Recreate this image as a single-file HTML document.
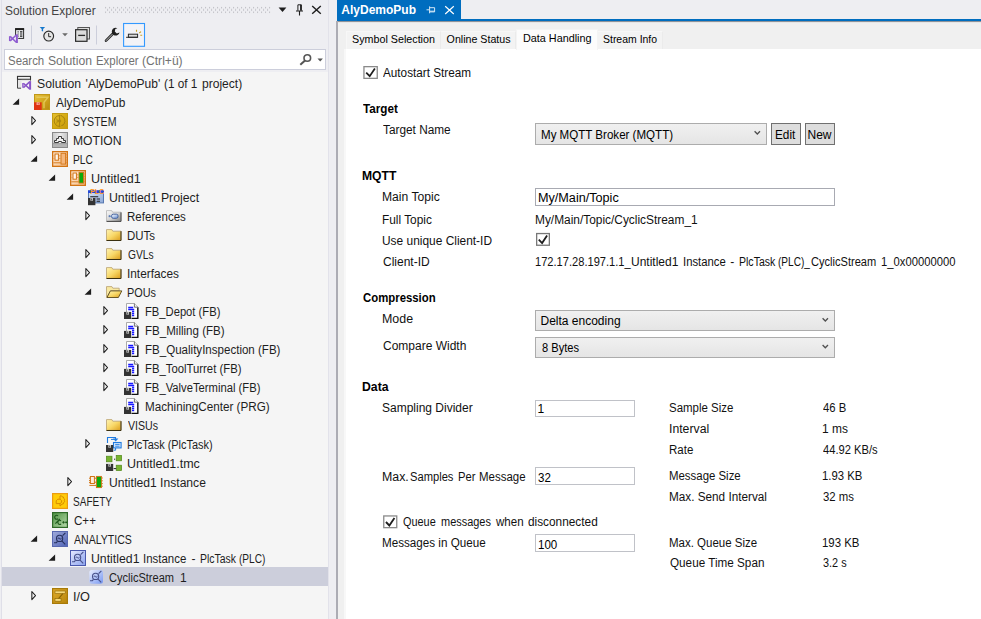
<!DOCTYPE html>
<html><head><meta charset="utf-8"><title>AlyDemoPub</title>
<style>
html,body{margin:0;padding:0}
body{width:981px;height:619px;overflow:hidden;position:relative;background:#fff;font-family:"Liberation Sans", Arial, sans-serif}
.t{position:absolute;white-space:pre;transform-origin:0 0}
svg{overflow:visible}
</style></head><body>
<div style="position:absolute;left:0px;top:0px;width:329px;height:619px;background:#f5f5f5"></div>
<div style="position:absolute;left:0px;top:0px;width:329px;height:72px;background:#eeeef2"></div>
<div style="position:absolute;left:0px;top:0px;width:1.3px;height:619px;background:#eeeef2"></div>
<div style="position:absolute;left:1.3px;top:0px;width:0.8px;height:619px;background:#dfdfe8"></div>
<div style="position:absolute;left:328.3px;top:0px;width:1.2px;height:619px;background:#e2e2ea"></div>
<div style="position:absolute;left:329px;top:0px;width:8px;height:619px;background:#eeeef2"></div>
<div style="position:absolute;left:337px;top:0px;width:644px;height:19px;background:#eeeef2"></div>
<div style="position:absolute;left:337px;top:19px;width:644px;height:2px;background:#006dbf"></div>
<div style="position:absolute;left:337px;top:0px;width:124px;height:21px;background:#006dbf"></div>
<div style="position:absolute;left:337px;top:21px;width:644px;height:598px;background:#f0f0f0"></div>
<div style="position:absolute;left:336px;top:21px;width:2px;height:598px;background:#acacb4"></div>
<div style="position:absolute;left:338px;top:21px;width:643px;height:1px;background:#8f9399"></div>
<div style="position:absolute;left:338px;top:22px;width:643px;height:1px;background:#e6e6e6"></div>
<div style="position:absolute;left:344px;top:49px;width:3px;height:570px;background:#fafafa"></div>
<div style="position:absolute;left:344px;top:49px;width:637px;height:570px;background:#fff"></div>
<div style="position:absolute;left:344px;top:49px;width:2px;height:570px;background:#f8f8f8"></div>
<svg style="position:absolute;left:105px;top:6px" width="167" height="8"><g transform="translate(0,0.7)"><defs><pattern id="gp" width="4" height="4.9" patternUnits="userSpaceOnUse"><rect x="0" y="0" width="1.1" height="1.5" fill="#bcbcc2"/><rect x="2" y="2.45" width="1.1" height="1.5" fill="#bcbcc2"/></pattern></defs><rect width="166" height="6.5" fill="url(#gp)"/></g></svg>
<svg style="position:absolute;left:276px;top:2px" width="50" height="18" viewBox="0 0 50 18"><path d="M2.6 5.6h7.8l-3.9 4.3z" fill="#1e1e1e"/><path d="M21.9 8.7V2.8h3.5v5.9M24.6 2.8v5.9" stroke="#1e1e1e" stroke-width="1" fill="none"/><path d="M20 9h7M23.5 9v4.4" stroke="#1e1e1e" stroke-width="1.1" fill="none"/><path d="M36.2 4l8.6 7.8M44.8 4l-8.6 7.8" stroke="#1e1e1e" stroke-width="1.4" fill="none"/></svg>
<svg style="position:absolute;left:0;top:22px" width="160" height="26" viewBox="0 22 160 26"><rect x="15.6" y="29" width="8" height="9.4" fill="#eeeef2" stroke="#2b2b2b" stroke-width="1"/><rect x="15.1" y="28.1" width="9" height="2" fill="#1e1e1e"/><path d="M17.6 31.9h1M20 31.9h2.4M17.6 34h1M20 34h2.4M17.6 36.1h1M20 36.1h2.4" stroke="#1e1e1e" stroke-width="1.1"/><path d="M8.4 35.4h9.8v8.2h-9.8z" fill="#eeeef2"/><path d="M16.2 35L10.2 40.9M16.2 42.3L10.2 36.4" stroke="#8e5bd0" stroke-width="1.5" fill="none"/><path d="M9.7 36.2v4.9" stroke="#8e5bd0" stroke-width="1.5"/><path d="M16.9 34.3v8.7" stroke="#8e5bd0" stroke-width="2"/><path d="M31.5 25.5v19M96.5 25.5v19" stroke="#cccedb" stroke-width="1"/><path d="M39.7 26.9h5.4l-2 2.2v2.5l-1.4-.6v-1.9z" fill="#1477cc"/><circle cx="48.7" cy="36.1" r="4.9" fill="#e6e6e6" stroke="#2b2b2b" stroke-width="1.15"/><path d="M48.7 33v3.7h2.4" stroke="#2b2b2b" stroke-width="1" fill="none"/><path d="M62.2 33.2h5.6l-2.8 3z" fill="#6a6a6a"/><rect x="77.8" y="27.5" width="11.7" height="11.5" fill="#dcdcdc" stroke="#555" stroke-width="1"/><rect x="75.6" y="29.7" width="11.4" height="11.6" fill="#dcdcdc" stroke="#2b2b2b" stroke-width="1.2"/><path d="M78.2 35.4h6.9" stroke="#2b2b2b" stroke-width="1.3"/><path d="M106 40.7l6.6-6.7" stroke="#2b2b2b" stroke-width="2.6" stroke-linecap="round"/><path d="M106.2 40.5l6-6.1" stroke="#dcdcdc" stroke-width="0.8" stroke-linecap="round"/><path d="M117.4 28.2a3.9 3.9 0 1 0 2.1 4.3l-2.7 .9-2-1.8.5-2.6z" fill="#1e1e1e"/><rect x="123.6" y="23.5" width="20.9" height="22.8" fill="#f3f3f7" stroke="#3399ff" stroke-width="1.1"/><rect x="128.4" y="34.2" width="9.2" height="3.1" fill="#dcdcdc" stroke="#2b2b2b" stroke-width="1"/><path d="M126.1 37.3h11.5" stroke="#2b2b2b" stroke-width="1"/><path d="M136.5 29.7v2.1M139.3 33l1.7-1.4M140.3 35.3h1.9" stroke="#c8a020" stroke-width="1.1"/></svg>
<div style="position:absolute;left:4px;top:49px;width:322px;height:21px;background:#fff;border:1px solid #cccedb;box-sizing:border-box"></div>
<svg style="position:absolute;left:296px;top:51px" width="30" height="18" viewBox="0 0 30 18"><circle cx="11.3" cy="7" r="3.3" stroke="#555" stroke-width="1.6" fill="none"/><path d="M9 9.4L4.3 13.8" stroke="#555" stroke-width="2"/><path d="M21.5 7.4h5.4l-2.7 3z" fill="#555"/></svg>
<svg style="position:absolute;left:16px;top:75px" width="16" height="16" viewBox="0 0 16 16"><rect x="1.5" y="1.5" width="13" height="11.8" fill="#e6e6e6" stroke="none"/><path d="M1.5 1.5v11.7h3.7M14.5 1.5v4.5" fill="none" stroke="#444" stroke-width="1"/><rect x="1.5" y="1.4" width="13" height="2.9" fill="#f2f2f2" stroke="#333" stroke-width="1.1"/><rect x="5.4" y="5.6" width="10.4" height="9.6" fill="#f5f5f5"/><rect x="5.4" y="4.9" width="8.6" height="1.2" fill="#e6e6e6"/><path d="M13.6 6.9L7.4 12.6M13.6 13.9L7.4 8.2" stroke="#8a55c8" stroke-width="1.5" fill="none"/><path d="M6.9 8v4.8" stroke="#8a55c8" stroke-width="1.4"/><path d="M14.1 6.1v8.6" stroke="#8a55c8" stroke-width="2"/></svg>
<svg style="position:absolute;left:12px;top:98px" width="9" height="9"><path d="M7.1 0.4V6.8H0.6z" fill="#1e1e1e"/></svg>
<svg style="position:absolute;left:34px;top:94px" width="16" height="16" viewBox="0 0 16 16"><defs><linearGradient id="gp1" x1="0" y1="0" x2="1" y2="1"><stop offset="0" stop-color="#e8c444"/><stop offset="0.5" stop-color="#d4a81e"/><stop offset="1" stop-color="#b48810"/></linearGradient></defs><rect x="0" y="0" width="16" height="16" fill="url(#gp1)"/><rect x="0.5" y="0.5" width="15" height="15" fill="none" stroke="#c09818" stroke-width="1"/><path d="M2.4 3.2h11.6l-4 5v6" stroke="#e6cc60" stroke-width="1.4" fill="none" opacity="0.85"/><rect x="0" y="8.3" width="7.7" height="7.7" fill="#e03412"/><rect x="2.6" y="8.3" width="3" height="2.7" fill="#f6c0b4"/><rect x="3.7" y="8.8" width="0.9" height="1.8" fill="#e03412"/></svg>
<svg style="position:absolute;left:31px;top:115px" width="8" height="12"><path d="M0.85 1.5L4.5 5.55L0.85 9.6z" fill="none" stroke="#1e1e1e" stroke-width="1.05" stroke-linejoin="round"/></svg>
<svg style="position:absolute;left:52px;top:113px" width="16" height="16" viewBox="0 0 16 16"><defs><linearGradient id="gs1" x1="0" y1="0" x2="1" y2="1"><stop offset="0" stop-color="#e6c030"/><stop offset="0.5" stop-color="#d6ac14"/><stop offset="1" stop-color="#c89c0c"/></linearGradient></defs><rect x="0.5" y="0.5" width="15" height="15" fill="url(#gs1)" stroke="#c39c14"/><path d="M7.6 2.6A5.4 5.4 0 0 0 7.6 13.4" fill="none" stroke="#a88410" stroke-width="1"/><path d="M7.6 1.8v12.4M8.4 2.6l1.6.2.4 1 1.3.3.2 1.2 1 .6-.3 1.3.5 1-.6 1 .1 1.2-1.1.6-.4 1.2-1.3.2-.8 .9" fill="none" stroke="#a88410" stroke-width="1"/><circle cx="7.6" cy="8" r="1.2" fill="none" stroke="#a88410" stroke-width="0.9"/><path d="M4.2 5.5c1.6 1.5 1.6 3.5 0 5" fill="none" stroke="#a88410" stroke-width="0.9"/></svg>
<svg style="position:absolute;left:31px;top:134px" width="8" height="12"><path d="M0.85 1.5L4.5 5.55L0.85 9.6z" fill="none" stroke="#1e1e1e" stroke-width="1.05" stroke-linejoin="round"/></svg>
<svg style="position:absolute;left:52px;top:132px" width="16" height="16" viewBox="0 0 16 16"><defs><linearGradient id="gm1" x1="0" y1="0" x2="1" y2="0"><stop offset="0" stop-color="#c8c8c8"/><stop offset="0.5" stop-color="#ececec"/><stop offset="1" stop-color="#c4c4c4"/></linearGradient></defs><rect x="0.5" y="0.5" width="15" height="15" fill="url(#gm1)" stroke="#8a8a8a"/><rect x="1" y="12" width="14" height="3" fill="#b4b4b4"/><path d="M1 11.6h14" stroke="#8a8a8a" stroke-width="0.8"/><path d="M2.5 10.5V8.5H4.5V6.5H6.5V4.5H9.5V6.5H11.5V8.5H13.5V10.5H9.5V9.5H6.5V10.5Z" fill="#f0f0f0" stroke="#3a3a3a" stroke-width="1" stroke-linejoin="miter"/></svg>
<svg style="position:absolute;left:30px;top:155px" width="9" height="9"><path d="M7.1 0.4V6.8H0.6z" fill="#1e1e1e"/></svg>
<svg style="position:absolute;left:52px;top:151px" width="16" height="16" viewBox="0 0 16 16"><defs><linearGradient id="gch" x1="0" y1="0" x2="1" y2="1"><stop offset="0" stop-color="#feeede"/><stop offset="1" stop-color="#f5ba80"/></linearGradient></defs><rect x="0.65" y="0.65" width="14.7" height="14.7" fill="url(#gch)" stroke="#d27414" stroke-width="1.3"/><rect x="3" y="3" width="3.4" height="6.2" fill="#fff6ec" stroke="#d27414" stroke-width="1"/><path d="M1.5 4.8h1M1.5 7.4h1M6.9 4.8h1.6M6.9 7.4h1.6M14 3.8h.8M14 6.4h.8M14 9h.8M14 11.4h.8" stroke="#e08a38" stroke-width="0.8"/><rect x="9" y="2.3" width="4.6" height="10.8" fill="#f4b67c" stroke="#d27414" stroke-width="0.9"/><path d="M1.4 11.8h7.4" stroke="#d27414" stroke-width="0.9"/></svg>
<svg style="position:absolute;left:48px;top:174px" width="9" height="9"><path d="M7.1 0.4V6.8H0.6z" fill="#1e1e1e"/></svg>
<svg style="position:absolute;left:70px;top:170px" width="16" height="16" viewBox="0 0 16 16"><defs><linearGradient id="gch" x1="0" y1="0" x2="1" y2="1"><stop offset="0" stop-color="#feeede"/><stop offset="1" stop-color="#f5ba80"/></linearGradient></defs><rect x="0.65" y="0.65" width="14.7" height="14.7" fill="url(#gch)" stroke="#d27414" stroke-width="1.3"/><rect x="3" y="3" width="3.4" height="6.2" fill="#fff6ec" stroke="#d27414" stroke-width="1"/><path d="M1.5 4.8h1M1.5 7.4h1M6.9 4.8h1.6M6.9 7.4h1.6M14 3.8h.8M14 6.4h.8M14 9h.8M14 11.4h.8" stroke="#e08a38" stroke-width="0.8"/><rect x="9" y="2.3" width="4.6" height="10.8" fill="#0aaa0a" stroke="#d27414" stroke-width="0.9"/><path d="M1.4 11.8h7.4" stroke="#d27414" stroke-width="0.9"/></svg>
<svg style="position:absolute;left:66px;top:193px" width="9" height="9"><path d="M7.1 0.4V6.8H0.6z" fill="#1e1e1e"/></svg>
<svg style="position:absolute;left:88px;top:189px" width="16" height="16" viewBox="0 0 16 16"><defs><linearGradient id="gpp" x1="0" y1="0" x2="1" y2="1"><stop offset="0" stop-color="#dce6f6"/><stop offset="1" stop-color="#8ca8d8"/></linearGradient></defs><rect x="0.5" y="1.9" width="15" height="12" fill="url(#gpp)" stroke="#5878b0"/><rect x="0" y="1.4" width="16" height="2.6" fill="#2448dc"/><path d="M2.2 7.8h8M8.6 10h3.4M8.6 12.2h3.4" stroke="#1e1e1e" stroke-width="1.1"/><text x="2.3" y="4.5" font-family="Liberation Sans, sans-serif" font-size="7" font-weight="bold" fill="#ff9420" letter-spacing="-0.1">PLC</text><rect x="0" y="9" width="7.4" height="7.2" fill="#333"/><rect x="2.4" y="9" width="2.6" height="2.7" fill="#d8d8d8"/><rect x="3.3" y="9.5" width="0.9" height="1.8" fill="#333"/></svg>
<svg style="position:absolute;left:85px;top:210px" width="8" height="12"><path d="M0.85 1.5L4.5 5.55L0.85 9.6z" fill="none" stroke="#1e1e1e" stroke-width="1.05" stroke-linejoin="round"/></svg>
<svg style="position:absolute;left:106px;top:208px" width="16" height="16" viewBox="0 0 16 16"><defs><linearGradient id="gr1" x1="0" y1="0" x2="1" y2="1"><stop offset="0" stop-color="#fcfcfc"/><stop offset="0.55" stop-color="#d0d0d0"/><stop offset="1" stop-color="#808080"/></linearGradient><linearGradient id="gr2" x1="0" y1="0" x2="1" y2="1"><stop offset="0" stop-color="#fff"/><stop offset="1" stop-color="#6a90d0"/></linearGradient></defs><path d="M0.5 2.6h5.2l1 1.6h8.3v9.1h-14.5z" fill="url(#gr1)" stroke="#b4b4b4" stroke-width="0.8"/><path d="M15 4.4v9H0.6" stroke="#444" stroke-width="1" fill="none"/><rect x="5.6" y="6.2" width="6.4" height="4.1" rx="1.6" fill="url(#gr2)" stroke="#3a5a9a" stroke-width="0.9"/><path d="M2.6 8.2h3M3.4 7.2v2" stroke="#5a7ab4" stroke-width="1"/></svg>
<svg style="position:absolute;left:106px;top:227px" width="16" height="16" viewBox="0 0 16 16"><defs><linearGradient id="gf1" x1="0" y1="0" x2="1" y2="1"><stop offset="0" stop-color="#fff4b4"/><stop offset="0.5" stop-color="#f8d868"/><stop offset="1" stop-color="#dc9c18"/></linearGradient></defs><path d="M0.5 2.6h5.4l.9 1.6h8.2v9.2h-14.5z" fill="url(#gf1)" stroke="#b8a070" stroke-width="0.8"/><path d="M15 4.2v9.3H0.5" stroke="#3a3010" stroke-width="1" fill="none"/></svg>
<svg style="position:absolute;left:85px;top:248px" width="8" height="12"><path d="M0.85 1.5L4.5 5.55L0.85 9.6z" fill="none" stroke="#1e1e1e" stroke-width="1.05" stroke-linejoin="round"/></svg>
<svg style="position:absolute;left:106px;top:246px" width="16" height="16" viewBox="0 0 16 16"><defs><linearGradient id="gf1" x1="0" y1="0" x2="1" y2="1"><stop offset="0" stop-color="#fff4b4"/><stop offset="0.5" stop-color="#f8d868"/><stop offset="1" stop-color="#dc9c18"/></linearGradient></defs><path d="M0.5 2.6h5.4l.9 1.6h8.2v9.2h-14.5z" fill="url(#gf1)" stroke="#b8a070" stroke-width="0.8"/><path d="M15 4.2v9.3H0.5" stroke="#3a3010" stroke-width="1" fill="none"/></svg>
<svg style="position:absolute;left:85px;top:267px" width="8" height="12"><path d="M0.85 1.5L4.5 5.55L0.85 9.6z" fill="none" stroke="#1e1e1e" stroke-width="1.05" stroke-linejoin="round"/></svg>
<svg style="position:absolute;left:106px;top:265px" width="16" height="16" viewBox="0 0 16 16"><defs><linearGradient id="gf1" x1="0" y1="0" x2="1" y2="1"><stop offset="0" stop-color="#fff4b4"/><stop offset="0.5" stop-color="#f8d868"/><stop offset="1" stop-color="#dc9c18"/></linearGradient></defs><path d="M0.5 2.6h5.4l.9 1.6h8.2v9.2h-14.5z" fill="url(#gf1)" stroke="#b8a070" stroke-width="0.8"/><path d="M15 4.2v9.3H0.5" stroke="#3a3010" stroke-width="1" fill="none"/></svg>
<svg style="position:absolute;left:84px;top:288px" width="9" height="9"><path d="M7.1 0.4V6.8H0.6z" fill="#1e1e1e"/></svg>
<svg style="position:absolute;left:106px;top:284px" width="16" height="16" viewBox="0 0 16 16"><defs><linearGradient id="gf1" x1="0" y1="0" x2="1" y2="1"><stop offset="0" stop-color="#fff4b4"/><stop offset="0.5" stop-color="#f8d868"/><stop offset="1" stop-color="#dc9c18"/></linearGradient></defs><path d="M0.5 2.6h5.4l.9 1.6h6.4v2.6h-8.6L0.5 13.4z" fill="#f8e8a0" stroke="#b8a070" stroke-width="0.8"/><path d="M4.4 6.9h11.4l-3.4 6.6H1z" fill="url(#gf1)" stroke="#5a4818" stroke-width="0.9" stroke-linejoin="round"/></svg>
<svg style="position:absolute;left:103px;top:305px" width="8" height="12"><path d="M0.85 1.5L4.5 5.55L0.85 9.6z" fill="none" stroke="#1e1e1e" stroke-width="1.05" stroke-linejoin="round"/></svg>
<svg style="position:absolute;left:124px;top:303px" width="16" height="16" viewBox="0 0 16 16"><path d="M2.5 0.5h8l3.5 3.5v11.5h-11.5z" fill="#fff" stroke="#a0a0a0" stroke-width="0.9"/><path d="M13.8 4.2v11.2h-6" stroke="#111" stroke-width="1.3" fill="none"/><path d="M10.4 0.6v3.6h3.5" fill="#f0f0f0" stroke="#555" stroke-width="0.8"/><path d="M4.2 4.5h5M4.2 6.5h6M8 8.5h2.2M8 10.5h2.2M8 12.5h2.2" stroke="#1818ff" stroke-width="1.3"/><rect x="0" y="8.9" width="7.2" height="7.1" fill="#333"/><rect x="2.4" y="8.9" width="2.6" height="2.7" fill="#d8d8d8"/><rect x="3.3" y="9.4" width="0.9" height="1.8" fill="#333"/></svg>
<svg style="position:absolute;left:103px;top:324px" width="8" height="12"><path d="M0.85 1.5L4.5 5.55L0.85 9.6z" fill="none" stroke="#1e1e1e" stroke-width="1.05" stroke-linejoin="round"/></svg>
<svg style="position:absolute;left:124px;top:322px" width="16" height="16" viewBox="0 0 16 16"><path d="M2.5 0.5h8l3.5 3.5v11.5h-11.5z" fill="#fff" stroke="#a0a0a0" stroke-width="0.9"/><path d="M13.8 4.2v11.2h-6" stroke="#111" stroke-width="1.3" fill="none"/><path d="M10.4 0.6v3.6h3.5" fill="#f0f0f0" stroke="#555" stroke-width="0.8"/><path d="M4.2 4.5h5M4.2 6.5h6M8 8.5h2.2M8 10.5h2.2M8 12.5h2.2" stroke="#1818ff" stroke-width="1.3"/><rect x="0" y="8.9" width="7.2" height="7.1" fill="#333"/><rect x="2.4" y="8.9" width="2.6" height="2.7" fill="#d8d8d8"/><rect x="3.3" y="9.4" width="0.9" height="1.8" fill="#333"/></svg>
<svg style="position:absolute;left:103px;top:343px" width="8" height="12"><path d="M0.85 1.5L4.5 5.55L0.85 9.6z" fill="none" stroke="#1e1e1e" stroke-width="1.05" stroke-linejoin="round"/></svg>
<svg style="position:absolute;left:124px;top:341px" width="16" height="16" viewBox="0 0 16 16"><path d="M2.5 0.5h8l3.5 3.5v11.5h-11.5z" fill="#fff" stroke="#a0a0a0" stroke-width="0.9"/><path d="M13.8 4.2v11.2h-6" stroke="#111" stroke-width="1.3" fill="none"/><path d="M10.4 0.6v3.6h3.5" fill="#f0f0f0" stroke="#555" stroke-width="0.8"/><path d="M4.2 4.5h5M4.2 6.5h6M8 8.5h2.2M8 10.5h2.2M8 12.5h2.2" stroke="#1818ff" stroke-width="1.3"/><rect x="0" y="8.9" width="7.2" height="7.1" fill="#333"/><rect x="2.4" y="8.9" width="2.6" height="2.7" fill="#d8d8d8"/><rect x="3.3" y="9.4" width="0.9" height="1.8" fill="#333"/></svg>
<svg style="position:absolute;left:103px;top:362px" width="8" height="12"><path d="M0.85 1.5L4.5 5.55L0.85 9.6z" fill="none" stroke="#1e1e1e" stroke-width="1.05" stroke-linejoin="round"/></svg>
<svg style="position:absolute;left:124px;top:360px" width="16" height="16" viewBox="0 0 16 16"><path d="M2.5 0.5h8l3.5 3.5v11.5h-11.5z" fill="#fff" stroke="#a0a0a0" stroke-width="0.9"/><path d="M13.8 4.2v11.2h-6" stroke="#111" stroke-width="1.3" fill="none"/><path d="M10.4 0.6v3.6h3.5" fill="#f0f0f0" stroke="#555" stroke-width="0.8"/><path d="M4.2 4.5h5M4.2 6.5h6M8 8.5h2.2M8 10.5h2.2M8 12.5h2.2" stroke="#1818ff" stroke-width="1.3"/><rect x="0" y="8.9" width="7.2" height="7.1" fill="#333"/><rect x="2.4" y="8.9" width="2.6" height="2.7" fill="#d8d8d8"/><rect x="3.3" y="9.4" width="0.9" height="1.8" fill="#333"/></svg>
<svg style="position:absolute;left:103px;top:381px" width="8" height="12"><path d="M0.85 1.5L4.5 5.55L0.85 9.6z" fill="none" stroke="#1e1e1e" stroke-width="1.05" stroke-linejoin="round"/></svg>
<svg style="position:absolute;left:124px;top:379px" width="16" height="16" viewBox="0 0 16 16"><path d="M2.5 0.5h8l3.5 3.5v11.5h-11.5z" fill="#fff" stroke="#a0a0a0" stroke-width="0.9"/><path d="M13.8 4.2v11.2h-6" stroke="#111" stroke-width="1.3" fill="none"/><path d="M10.4 0.6v3.6h3.5" fill="#f0f0f0" stroke="#555" stroke-width="0.8"/><path d="M4.2 4.5h5M4.2 6.5h6M8 8.5h2.2M8 10.5h2.2M8 12.5h2.2" stroke="#1818ff" stroke-width="1.3"/><rect x="0" y="8.9" width="7.2" height="7.1" fill="#333"/><rect x="2.4" y="8.9" width="2.6" height="2.7" fill="#d8d8d8"/><rect x="3.3" y="9.4" width="0.9" height="1.8" fill="#333"/></svg>
<svg style="position:absolute;left:124px;top:398px" width="16" height="16" viewBox="0 0 16 16"><path d="M2.5 0.5h8l3.5 3.5v11.5h-11.5z" fill="#fff" stroke="#a0a0a0" stroke-width="0.9"/><path d="M13.8 4.2v11.2h-6" stroke="#111" stroke-width="1.3" fill="none"/><path d="M10.4 0.6v3.6h3.5" fill="#f0f0f0" stroke="#555" stroke-width="0.8"/><path d="M4.2 4.5h5M4.2 6.5h6M8 8.5h2.2M8 10.5h2.2M8 12.5h2.2" stroke="#1818ff" stroke-width="1.3"/><rect x="0" y="8.9" width="7.2" height="7.1" fill="#333"/><rect x="2.4" y="8.9" width="2.6" height="2.7" fill="#d8d8d8"/><rect x="3.3" y="9.4" width="0.9" height="1.8" fill="#333"/></svg>
<svg style="position:absolute;left:106px;top:417px" width="16" height="16" viewBox="0 0 16 16"><defs><linearGradient id="gf1" x1="0" y1="0" x2="1" y2="1"><stop offset="0" stop-color="#fff4b4"/><stop offset="0.5" stop-color="#f8d868"/><stop offset="1" stop-color="#dc9c18"/></linearGradient></defs><path d="M0.5 2.6h5.4l.9 1.6h8.2v9.2h-14.5z" fill="url(#gf1)" stroke="#b8a070" stroke-width="0.8"/><path d="M15 4.2v9.3H0.5" stroke="#3a3010" stroke-width="1" fill="none"/></svg>
<svg style="position:absolute;left:85px;top:438px" width="8" height="12"><path d="M0.85 1.5L4.5 5.55L0.85 9.6z" fill="none" stroke="#1e1e1e" stroke-width="1.05" stroke-linejoin="round"/></svg>
<svg style="position:absolute;left:106px;top:436px" width="16" height="16" viewBox="0 0 16 16"><path d="M1.5 7V1.5h8v3" fill="none" stroke="#1f7be0" stroke-width="1.1"/><rect x="7.5" y="6.5" width="7.6" height="5.4" fill="#d8e8fc" stroke="#1f7be0" stroke-width="1.1"/><path d="M7 2.4h5.4l-2.7 3z" fill="#1f7be0"/><path d="M9.2 8.4h4.4M9.2 10.2h4.4" stroke="#1f7be0" stroke-width="0.9"/><path d="M9.6 12v2.2h-2M5 3.4h3" stroke="#1f7be0" fill="none"/><rect x="0" y="9" width="7.2" height="7" fill="#333"/><rect x="2.4" y="9" width="2.6" height="2.7" fill="#d8d8d8"/><rect x="3.3" y="9.5" width="0.9" height="1.8" fill="#333"/></svg>
<svg style="position:absolute;left:106px;top:455px" width="16" height="16" viewBox="0 0 16 16"><rect x="0.4" y="1.2" width="5.6" height="5.6" fill="#78b430" stroke="#50881a" stroke-width="0.7"/><rect x="10.2" y="0.4" width="5.4" height="5.4" fill="#78b430" stroke="#50881a" stroke-width="0.7"/><rect x="10.2" y="10.2" width="5.4" height="5.4" fill="#78b430" stroke="#50881a" stroke-width="0.7"/><path d="M8 4.2h1.2M7.6 13.6h2.6" stroke="#222" stroke-width="1"/><rect x="0" y="8.9" width="7.2" height="7.1" fill="#333"/><rect x="2.4" y="8.9" width="2.6" height="2.7" fill="#d8d8d8"/><rect x="3.3" y="9.4" width="0.9" height="1.8" fill="#333"/></svg>
<svg style="position:absolute;left:67px;top:476px" width="8" height="12"><path d="M0.85 1.5L4.5 5.55L0.85 9.6z" fill="none" stroke="#1e1e1e" stroke-width="1.05" stroke-linejoin="round"/></svg>
<svg style="position:absolute;left:88px;top:474px" width="16" height="16" viewBox="0 0 16 16"><g transform="translate(0,1)"><rect x="2.4" y="1.5" width="4" height="7" fill="#fdeede" stroke="#d27414" stroke-width="1"/><rect x="8.4" y="1.4" width="5" height="11.2" fill="#0aaa0a" stroke="#d27414" stroke-width="0.9"/><path d="M1 3.2h1.4M1 5.6h1.4M1 7.6h1.4M6.4 3.2h2M6.4 7.2h2M13.4 3h1.4M13.4 5.8h1.4M13.4 8.6h1.4M13.4 11.2h1.4M1.4 10.4h7" stroke="#d27414" stroke-width="1"/></g></svg>
<svg style="position:absolute;left:52px;top:493px" width="16" height="16" viewBox="0 0 16 16"><rect x="0.6" y="0.6" width="14.8" height="14.8" fill="#ffcc08" stroke="#ec9c10" stroke-width="1.2"/><path d="M8 3l1.3-.3.8 1.1 1.3.2.2 1.3 1.1.8-.4 1.3.4 1.3-1.1.8-.2 1.3-1.3.2-.8 1.1L8 13M8 3v3.2H5.8L4.2 7.8v2.8H8V13M8 6.2l1.6 1.4v1.8L8 10.6" fill="none" stroke="#d88c00" stroke-width="1"/></svg>
<svg style="position:absolute;left:52px;top:512px" width="16" height="16" viewBox="0 0 16 16"><defs><linearGradient id="gc1" x1="0" y1="0" x2="1" y2="1"><stop offset="0" stop-color="#4c9240"/><stop offset="1" stop-color="#b8daac"/></linearGradient></defs><rect x="0.6" y="0.6" width="14.8" height="14.8" fill="url(#gc1)" stroke="#2f6a28" stroke-width="1.2"/><path d="M6 4A1.9 2 0 1 0 6 6.6M9 8.8A1.9 2.1 0 1 0 9 12M3.4 11.6L7.8 6.8M10.4 10.4h2.2M11.5 9.3v2.2M13.2 10.4h1.8M14.1 9.5v1.8" fill="none" stroke="#1f5a1c" stroke-width="1.1"/></svg>
<svg style="position:absolute;left:30px;top:535px" width="9" height="9"><path d="M7.1 0.4V6.8H0.6z" fill="#1e1e1e"/></svg>
<svg style="position:absolute;left:52px;top:531px" width="16" height="16" viewBox="0 0 16 16"><defs><linearGradient id="ga1" x1="0" y1="0" x2="1" y2="1"><stop offset="0" stop-color="#a4aedc"/><stop offset="1" stop-color="#4a5eb4"/></linearGradient></defs><rect x="0" y="0" width="16" height="16" fill="url(#ga1)"/><rect x="0.5" y="0.5" width="15" height="15" fill="none" stroke="#5868b0"/><circle cx="7.6" cy="7.4" r="3.1" fill="none" stroke="#26305e" stroke-width="1.1"/><path d="M5.9 8c.6-1.6 1.2-1.6 1.7-.4s1.1 1 1.7-.8" fill="none" stroke="#26305e" stroke-width="0.9"/><path d="M9.8 9.8l3.4 3.6M10.6 4.6l2.8-2.8M2 11.8h2.4l1-1.4" fill="none" stroke="#26305e" stroke-width="1.1"/></svg>
<svg style="position:absolute;left:48px;top:554px" width="9" height="9"><path d="M7.1 0.4V6.8H0.6z" fill="#1e1e1e"/></svg>
<svg style="position:absolute;left:70px;top:550px" width="16" height="16" viewBox="0 0 16 16"><defs><linearGradient id="ga2" x1="0" y1="0" x2="1" y2="1"><stop offset="0" stop-color="#e6eaff"/><stop offset="1" stop-color="#8aa2ee"/></linearGradient></defs><rect x="0.5" y="0.5" width="15" height="15" fill="url(#ga2)" stroke="#4a59ad"/><circle cx="7.6" cy="7.4" r="3.1" fill="none" stroke="#46508a" stroke-width="1.1"/><path d="M5.9 8c.6-1.6 1.2-1.6 1.7-.4s1.1 1 1.7-.8" fill="none" stroke="#46508a" stroke-width="0.9"/><path d="M9.8 9.8l3.4 3.6M10.6 4.6l2.8-2.8M2 11.8h2.4l1-1.4" fill="none" stroke="#46508a" stroke-width="1.1"/></svg>
<div style="position:absolute;left:2.1px;top:567px;width:326.2px;height:18.7px;background:#cccedb"></div>
<svg style="position:absolute;left:88px;top:569px" width="16" height="16" viewBox="0 0 16 16"><defs><linearGradient id="ga3" x1="0" y1="0" x2="1" y2="1"><stop offset="0" stop-color="#eaefff"/><stop offset="1" stop-color="#7898f2"/></linearGradient></defs><rect x="1.3" y="1" width="13.7" height="13.7" rx="2.5" fill="url(#ga3)"/><circle cx="7.6" cy="7.4" r="3.1" fill="none" stroke="#46508a" stroke-width="1.1"/><path d="M5.9 8c.6-1.6 1.2-1.6 1.7-.4s1.1 1 1.7-.8" fill="none" stroke="#46508a" stroke-width="0.9"/><path d="M9.8 9.8l3.4 3.6M10.6 4.6l2.8-2.8M2 11.8h2.4l1-1.4" fill="none" stroke="#46508a" stroke-width="1.1"/></svg>
<svg style="position:absolute;left:31px;top:590px" width="8" height="12"><path d="M0.85 1.5L4.5 5.55L0.85 9.6z" fill="none" stroke="#1e1e1e" stroke-width="1.05" stroke-linejoin="round"/></svg>
<svg style="position:absolute;left:52px;top:588px" width="16" height="16" viewBox="0 0 16 16"><defs><linearGradient id="gi1" x1="0" y1="0" x2="1" y2="1"><stop offset="0" stop-color="#e0ac2c"/><stop offset="1" stop-color="#b8860c"/></linearGradient></defs><rect x="0.6" y="0.6" width="14.8" height="14.8" fill="url(#gi1)" stroke="#a87a08" stroke-width="1.2"/><rect x="3" y="3" width="10.2" height="2.6" fill="#f6d878" stroke="#8a6404" stroke-width="0.6"/><rect x="3" y="10.6" width="6" height="2.6" fill="#f6d878" stroke="#8a6404" stroke-width="0.6"/><path d="M10.8 5.6L6.6 10.6" stroke="#8a6404" stroke-width="1.2"/></svg>
<svg style="position:absolute;left:425px;top:3px" width="34" height="14" viewBox="0 0 34 14"><path d="M1.5 6.8h3M4.6 3.4v6.9M4.6 4.7h5v4.2h-5M4.6 8.2h5" stroke="#d4e8f7" stroke-width="1" fill="none"/><path d="M20.2 3.2l8.6 7.8M28.8 3.2l-8.6 7.8" stroke="#fff" stroke-width="1.15" fill="none"/></svg>
<div style="position:absolute;left:345.5px;top:30.7px;width:95px;height:18.3px;box-sizing:border-box;background:#f3f3f3;border:1px solid #f7f7f7;border-bottom:none;border-right:1px solid #ebebeb"></div>
<div style="position:absolute;left:440.5px;top:30.7px;width:75.5px;height:18.3px;box-sizing:border-box;background:#f3f3f3;border-top:1px solid #f7f7f7;border-right:1px solid #ebebeb"></div>
<div style="position:absolute;left:598px;top:30.7px;width:64.5px;height:18.3px;box-sizing:border-box;background:#f3f3f3;border-top:1px solid #f7f7f7;border-right:1px solid #ebebeb"></div>
<div style="position:absolute;left:516px;top:29px;width:82.3px;height:20.5px;box-sizing:border-box;background:#fcfcfc;border:1px solid #f4f4f4;border-bottom:none"></div>
<svg style="position:absolute;left:363px;top:66px" width="16" height="14"><g transform="translate(0.3,0)"><rect x="0.65" y="0.65" width="13.30" height="11.7" fill="#fff" stroke="#8a8a8a" stroke-width="1.3"/><path d="M2.90 6.7l3.50 3.5L11.60 2.6" stroke="#1e1e1e" stroke-width="1.8" fill="none"/></g></svg>
<div style="position:absolute;left:535px;top:123px;width:232px;height:21.7px;box-sizing:border-box;border:1px solid #acacac;background:linear-gradient(#f0f0f0,#e5e5e5)"></div>
<svg style="position:absolute;left:754px;top:130px" width="9" height="7"><g transform="translate(0,0.6)"><path d="M0.6 0.6l2.7 2.8L6 0.6" stroke="#505050" stroke-width="1.3" fill="none"/></g></svg>
<div style="position:absolute;left:771px;top:123px;width:30px;height:21.5px;box-sizing:border-box;border:1px solid #707070;background:#ddd"></div>
<div style="position:absolute;left:805px;top:123px;width:30px;height:21.5px;box-sizing:border-box;border:1px solid #707070;background:#ddd"></div>
<div style="position:absolute;left:535px;top:188px;width:300px;height:17.8px;box-sizing:border-box;border:1px solid #a8aab2;background:#fff"></div>
<svg style="position:absolute;left:536px;top:232px" width="16" height="14"><g transform="translate(0,0.9)"><rect x="0.65" y="0.65" width="12.70" height="11.7" fill="#fff" stroke="#787878" stroke-width="1.3"/><path d="M2.77 6.7l3.34 3.5L11.08 2.6" stroke="#1e1e1e" stroke-width="1.8" fill="none"/></g></svg>
<div style="position:absolute;left:535px;top:310px;width:300px;height:21.3px;box-sizing:border-box;border:1px solid #acacac;background:linear-gradient(#f0f0f0,#e5e5e5)"></div>
<svg style="position:absolute;left:822px;top:317px" width="9" height="7"><g transform="translate(0,0.6)"><path d="M0.6 0.6l2.7 2.8L6 0.6" stroke="#505050" stroke-width="1.3" fill="none"/></g></svg>
<div style="position:absolute;left:535px;top:336.8px;width:300px;height:21.4px;box-sizing:border-box;border:1px solid #acacac;background:linear-gradient(#f0f0f0,#e5e5e5)"></div>
<svg style="position:absolute;left:822px;top:344px" width="9" height="7"><g transform="translate(0,0.4)"><path d="M0.6 0.6l2.7 2.8L6 0.6" stroke="#505050" stroke-width="1.3" fill="none"/></g></svg>
<div style="position:absolute;left:535px;top:399.5px;width:100px;height:17.4px;box-sizing:border-box;border:1px solid #c0c2c8;background:#fff"></div>
<div style="position:absolute;left:535px;top:467.3px;width:100px;height:17.5px;box-sizing:border-box;border:1px solid #c0c2c8;background:#fff"></div>
<svg style="position:absolute;left:383px;top:515px" width="16" height="14"><g transform="translate(0.1,0.3)"><rect x="0.65" y="0.65" width="13.00" height="11.7" fill="#fff" stroke="#8a8a8a" stroke-width="1.3"/><path d="M2.83 6.7l3.42 3.5L11.34 2.6" stroke="#1e1e1e" stroke-width="1.8" fill="none"/></g></svg>
<div style="position:absolute;left:535px;top:534.3px;width:100px;height:17.5px;box-sizing:border-box;border:1px solid #c0c2c8;background:#fff"></div>
<span class="t" style="left:5.21px;top:3.54px;font-size:12px;line-height:14px;color:#444;transform:scaleX(0.9923);">Solution Explorer</span>
<span class="t" style="left:8.45px;top:53.74px;font-size:12px;line-height:14px;color:#717171;transform:scaleX(0.9528);">Search</span>
<span class="t" style="left:48.29px;top:53.74px;font-size:12px;line-height:14px;color:#717171;transform:scaleX(1.0143);">Solution</span>
<span class="t" style="left:96.15px;top:53.74px;font-size:12px;line-height:14px;color:#717171;transform:scaleX(0.9523);">Explorer</span>
<span class="t" style="left:142.49px;top:53.74px;font-size:12px;line-height:14px;color:#717171;transform:scaleX(1.0077);">(Ctrl+ü)</span>
<span class="t" style="left:36.78px;top:76.54px;font-size:12px;line-height:14px;color:#1e1e1e;transform:scaleX(1.0167);">Solution</span>
<span class="t" style="left:85.60px;top:76.54px;font-size:12px;line-height:14px;color:#1e1e1e;">'AlyDemoPub'</span>
<span class="t" style="left:163.62px;top:76.54px;font-size:12px;line-height:14px;color:#1e1e1e;transform:scaleX(0.9818);">(1 of 1</span>
<span class="t" style="left:201.69px;top:76.54px;font-size:12px;line-height:14px;color:#1e1e1e;transform:scaleX(1.0051);">project)</span>
<span class="t" style="left:56.00px;top:95.54px;font-size:12px;line-height:14px;color:#1e1e1e;transform:scaleX(0.9900);">AlyDemoPub</span>
<span class="t" style="left:73.12px;top:114.54px;font-size:12px;line-height:14px;color:#1e1e1e;transform:scaleX(0.8812);">SYSTEM</span>
<span class="t" style="left:72.99px;top:133.54px;font-size:12px;line-height:14px;color:#1e1e1e;transform:scaleX(1.0109);">MOTION</span>
<span class="t" style="left:73.15px;top:152.54px;font-size:12px;line-height:14px;color:#1e1e1e;transform:scaleX(0.8500);">PLC</span>
<span class="t" style="left:90.95px;top:171.54px;font-size:12px;line-height:14px;color:#1e1e1e;transform:scaleX(1.0478);">Untitled1</span>
<span class="t" style="left:108.98px;top:190.54px;font-size:12px;line-height:14px;color:#1e1e1e;transform:scaleX(1.0241);">Untitled1 Project</span>
<span class="t" style="left:127.04px;top:209.54px;font-size:12px;line-height:14px;color:#1e1e1e;transform:scaleX(0.9583);">References</span>
<span class="t" style="left:127.05px;top:228.54px;font-size:12px;line-height:14px;color:#1e1e1e;transform:scaleX(0.9536);">DUTs</span>
<span class="t" style="left:128.00px;top:247.54px;font-size:12px;line-height:14px;color:#1e1e1e;transform:scaleX(0.8533);">GVLs</span>
<span class="t" style="left:127.01px;top:266.54px;font-size:12px;line-height:14px;color:#1e1e1e;transform:scaleX(0.9865);">Interfaces</span>
<span class="t" style="left:127.09px;top:285.54px;font-size:12px;line-height:14px;color:#1e1e1e;transform:scaleX(0.9065);">POUs</span>
<span class="t" style="left:145.07px;top:304.54px;font-size:12px;line-height:14px;color:#1e1e1e;transform:scaleX(0.9342);">FB_Depot (FB)</span>
<span class="t" style="left:145.04px;top:323.54px;font-size:12px;line-height:14px;color:#1e1e1e;transform:scaleX(0.9630);">FB_Milling (FB)</span>
<span class="t" style="left:145.04px;top:342.54px;font-size:12px;line-height:14px;color:#1e1e1e;transform:scaleX(0.9626);">FB_QualityInspection (FB)</span>
<span class="t" style="left:145.06px;top:361.54px;font-size:12px;line-height:14px;color:#1e1e1e;transform:scaleX(0.9436);">FB_ToolTurret (FB)</span>
<span class="t" style="left:145.06px;top:380.54px;font-size:12px;line-height:14px;color:#1e1e1e;transform:scaleX(0.9377);">FB_ValveTerminal (FB)</span>
<span class="t" style="left:145.03px;top:399.54px;font-size:12px;line-height:14px;color:#1e1e1e;transform:scaleX(0.9732);">MachiningCenter (PRG)</span>
<span class="t" style="left:128.00px;top:418.54px;font-size:12px;line-height:14px;color:#1e1e1e;transform:scaleX(0.8824);">VISUs</span>
<span class="t" style="left:127.09px;top:437.54px;font-size:12px;line-height:14px;color:#1e1e1e;transform:scaleX(0.9108);">PlcTask (PlcTask)</span>
<span class="t" style="left:126.96px;top:456.54px;font-size:12px;line-height:14px;color:#1e1e1e;transform:scaleX(1.0406);">Untitled1.tmc</span>
<span class="t" style="left:108.99px;top:475.54px;font-size:12px;line-height:14px;color:#1e1e1e;transform:scaleX(1.0084);">Untitled1 Instance</span>
<span class="t" style="left:73.16px;top:494.54px;font-size:12px;line-height:14px;color:#1e1e1e;transform:scaleX(0.8370);">SAFETY</span>
<span class="t" style="left:74.00px;top:513.54px;font-size:12px;line-height:14px;color:#1e1e1e;transform:scaleX(0.9652);">C++</span>
<span class="t" style="left:74.00px;top:532.54px;font-size:12px;line-height:14px;color:#1e1e1e;transform:scaleX(0.8803);">ANALYTICS</span>
<span class="t" style="left:90.68px;top:551.54px;font-size:12px;line-height:14px;color:#1e1e1e;transform:scaleX(1.0239);">Untitled1</span>
<span class="t" style="left:143.45px;top:551.54px;font-size:12px;line-height:14px;color:#1e1e1e;transform:scaleX(0.9545);">Instance</span>
<span class="t" style="left:191.40px;top:551.54px;font-size:12px;line-height:14px;color:#1e1e1e;">-</span>
<span class="t" style="left:199.63px;top:551.54px;font-size:12px;line-height:14px;color:#1e1e1e;transform:scaleX(0.8700);">PlcTask</span>
<span class="t" style="left:239.36px;top:551.54px;font-size:12px;line-height:14px;color:#1e1e1e;transform:scaleX(0.8433);">(PLC)</span>
<span class="t" style="left:109.20px;top:570.54px;font-size:12px;line-height:14px;color:#1e1e1e;transform:scaleX(0.9200);">CyclicStream</span>
<span class="t" style="left:180.00px;top:570.54px;font-size:12px;line-height:14px;color:#1e1e1e;">1</span>
<span class="t" style="left:72.94px;top:589.54px;font-size:12px;line-height:14px;color:#1e1e1e;transform:scaleX(1.0600);">I/O</span>
<span class="t" style="left:341.30px;top:2.64px;font-size:12px;line-height:14px;color:#fff;font-weight:bold;">AlyDemoPub</span>
<span class="t" style="left:351.70px;top:33.40px;font-size:10.667px;line-height:13px;color:#000;transform:scaleX(1.0073);">Symbol Selection</span>
<span class="t" style="left:446.60px;top:33.40px;font-size:10.667px;line-height:13px;color:#000;">Online Status</span>
<span class="t" style="left:523.08px;top:31.60px;font-size:10.667px;line-height:13px;color:#000;transform:scaleX(1.0152);">Data Handling</span>
<span class="t" style="left:603.30px;top:33.40px;font-size:10.667px;line-height:13px;color:#000;transform:scaleX(0.9818);">Stream Info</span>
<span class="t" style="left:383.00px;top:65.64px;font-size:12px;line-height:14px;color:#111;transform:scaleX(0.9778);">Autostart Stream</span>
<span class="t" style="left:363.30px;top:101.94px;font-size:12px;line-height:14px;color:#000;font-weight:bold;transform:scaleX(0.9722);">Target</span>
<span class="t" style="left:383.00px;top:122.94px;font-size:12px;line-height:14px;color:#111;transform:scaleX(0.9853);">Target Name</span>
<span class="t" style="left:540.54px;top:127.64px;font-size:12px;line-height:14px;color:#000;transform:scaleX(0.9632);">My MQTT Broker (MQTT)</span>
<span class="t" style="left:775.32px;top:127.84px;font-size:12px;line-height:14px;color:#000;transform:scaleX(0.9800);">Edit</span>
<span class="t" style="left:807.50px;top:127.84px;font-size:12px;line-height:14px;color:#000;">New</span>
<span class="t" style="left:362.29px;top:168.74px;font-size:12px;line-height:14px;color:#000;font-weight:bold;transform:scaleX(1.0121);">MQTT</span>
<span class="t" style="left:381.99px;top:190.14px;font-size:12px;line-height:14px;color:#111;transform:scaleX(1.0107);">Main Topic</span>
<span class="t" style="left:537.55px;top:190.84px;font-size:12px;line-height:14px;color:#000;transform:scaleX(1.0526);">My/Main/Topic</span>
<span class="t" style="left:382.01px;top:212.54px;font-size:12px;line-height:14px;color:#111;transform:scaleX(0.9878);">Full Topic</span>
<span class="t" style="left:534.91px;top:213.04px;font-size:12px;line-height:14px;color:#111;transform:scaleX(0.9914);">My/Main/Topic/CyclicStream_1</span>
<span class="t" style="left:382.01px;top:233.74px;font-size:12px;line-height:14px;color:#111;transform:scaleX(0.9936);">Use unique Client-ID</span>
<span class="t" style="left:383.00px;top:254.64px;font-size:12px;line-height:14px;color:#111;">Client-ID</span>
<span class="t" style="left:534.67px;top:254.74px;font-size:12px;line-height:14px;color:#111;transform:scaleX(0.9252);">172.17.28.197.1.1_</span>
<span class="t" style="left:631.00px;top:254.74px;font-size:12px;line-height:14px;color:#111;">Untitled1</span>
<span class="t" style="left:682.66px;top:254.74px;font-size:12px;line-height:14px;color:#111;transform:scaleX(0.9432);">Instance</span>
<span class="t" style="left:730.30px;top:254.74px;font-size:12px;line-height:14px;color:#111;">-</span>
<span class="t" style="left:738.82px;top:254.74px;font-size:12px;line-height:14px;color:#111;transform:scaleX(0.8775);">PlcTask</span>
<span class="t" style="left:778.36px;top:254.74px;font-size:12px;line-height:14px;color:#111;transform:scaleX(0.8378);">(PLC)_</span>
<span class="t" style="left:811.10px;top:254.74px;font-size:12px;line-height:14px;color:#111;transform:scaleX(0.9229);">CyclicStream</span>
<span class="t" style="left:880.76px;top:254.74px;font-size:12px;line-height:14px;color:#111;transform:scaleX(0.9372);">1_0x00000000</span>
<span class="t" style="left:363.30px;top:291.24px;font-size:12px;line-height:14px;color:#000;font-weight:bold;transform:scaleX(0.9474);">Compression</span>
<span class="t" style="left:381.97px;top:311.64px;font-size:12px;line-height:14px;color:#111;transform:scaleX(1.0345);">Mode</span>
<span class="t" style="left:540.50px;top:314.24px;font-size:12px;line-height:14px;color:#000;">Delta encoding</span>
<span class="t" style="left:383.00px;top:338.84px;font-size:12px;line-height:14px;color:#111;">Compare Width</span>
<span class="t" style="left:541.50px;top:341.24px;font-size:12px;line-height:14px;color:#000;transform:scaleX(0.9250);">8 Bytes</span>
<span class="t" style="left:362.28px;top:380.24px;font-size:12px;line-height:14px;color:#000;font-weight:bold;transform:scaleX(1.0200);">Data</span>
<span class="t" style="left:382.00px;top:401.14px;font-size:12px;line-height:14px;color:#111;">Sampling Divider</span>
<span class="t" style="left:537.60px;top:402.44px;font-size:12px;line-height:14px;color:#000;">1</span>
<span class="t" style="left:381.67px;top:469.64px;font-size:12px;line-height:14px;color:#111;transform:scaleX(1.0292);">Max.</span>
<span class="t" style="left:410.27px;top:469.64px;font-size:12px;line-height:14px;color:#111;transform:scaleX(0.9304);">Samples</span>
<span class="t" style="left:457.57px;top:469.64px;font-size:12px;line-height:14px;color:#111;transform:scaleX(0.9333);">Per</span>
<span class="t" style="left:478.84px;top:469.64px;font-size:12px;line-height:14px;color:#111;transform:scaleX(0.9553);">Message</span>
<span class="t" style="left:538.00px;top:470.64px;font-size:12px;line-height:14px;color:#000;transform:scaleX(0.9615);">32</span>
<span class="t" style="left:403.20px;top:515.44px;font-size:12px;line-height:14px;color:#111;transform:scaleX(0.9083);">Queue</span>
<span class="t" style="left:440.79px;top:515.44px;font-size:12px;line-height:14px;color:#111;transform:scaleX(0.9130);">messages</span>
<span class="t" style="left:495.50px;top:515.44px;font-size:12px;line-height:14px;color:#111;transform:scaleX(0.9607);">when</span>
<span class="t" style="left:528.00px;top:515.44px;font-size:12px;line-height:14px;color:#111;transform:scaleX(0.9857);">disconnected</span>
<span class="t" style="left:382.03px;top:536.34px;font-size:12px;line-height:14px;color:#111;transform:scaleX(0.9714);">Messages in Queue</span>
<span class="t" style="left:537.64px;top:537.64px;font-size:12px;line-height:14px;color:#000;transform:scaleX(0.9632);">100</span>
<span class="t" style="left:669.05px;top:400.84px;font-size:12px;line-height:14px;color:#111;transform:scaleX(0.9545);">Sample Size</span>
<span class="t" style="left:668.98px;top:421.84px;font-size:12px;line-height:14px;color:#111;transform:scaleX(1.0211);">Interval</span>
<span class="t" style="left:669.04px;top:442.84px;font-size:12px;line-height:14px;color:#111;transform:scaleX(0.9583);">Rate</span>
<span class="t" style="left:669.05px;top:468.64px;font-size:12px;line-height:14px;color:#111;transform:scaleX(0.9514);">Message Size</span>
<span class="t" style="left:669.02px;top:489.64px;font-size:12px;line-height:14px;color:#111;transform:scaleX(0.9788);">Max. Send Interval</span>
<span class="t" style="left:669.04px;top:535.54px;font-size:12px;line-height:14px;color:#111;transform:scaleX(0.9582);">Max. Queue Size</span>
<span class="t" style="left:670.00px;top:556.44px;font-size:12px;line-height:14px;color:#111;transform:scaleX(0.9760);">Queue Time Span</span>
<span class="t" style="left:822.80px;top:400.84px;font-size:12px;line-height:14px;color:#111;transform:scaleX(0.9417);">46 B</span>
<span class="t" style="left:821.80px;top:421.84px;font-size:12px;line-height:14px;color:#111;transform:scaleX(0.9960);">1 ms</span>
<span class="t" style="left:822.80px;top:442.84px;font-size:12px;line-height:14px;color:#111;transform:scaleX(0.9305);">44.92 KB/s</span>
<span class="t" style="left:821.85px;top:468.64px;font-size:12px;line-height:14px;color:#111;transform:scaleX(0.9463);">1.93 KB</span>
<span class="t" style="left:822.80px;top:489.64px;font-size:12px;line-height:14px;color:#111;transform:scaleX(0.9485);">32 ms</span>
<span class="t" style="left:821.85px;top:535.54px;font-size:12px;line-height:14px;color:#111;transform:scaleX(0.9526);">193 KB</span>
<span class="t" style="left:822.80px;top:556.44px;font-size:12px;line-height:14px;color:#111;transform:scaleX(0.9077);">3.2 s</span>
</body></html>
